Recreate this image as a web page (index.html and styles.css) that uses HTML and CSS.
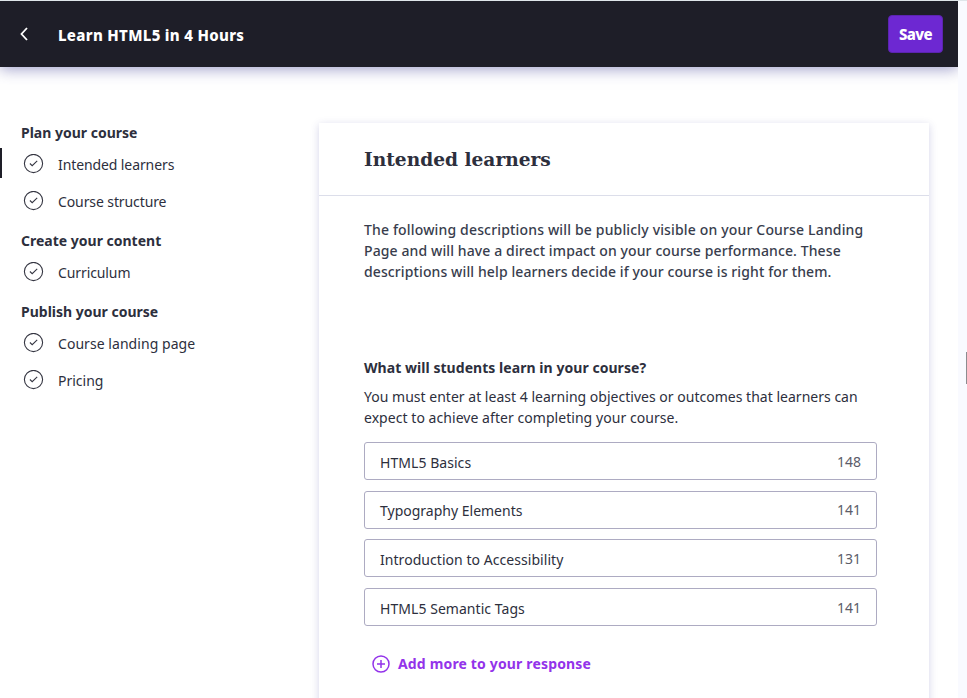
FILE: index.html
```html
<!DOCTYPE html>
<html lang="en">
<head>
<meta charset="utf-8">
<title>Learn HTML5 in 4 Hours</title>
<link rel="stylesheet" href="styles.css">
</head>
<body>
<svg width="0" height="0" class="defs"><symbol id="check" viewBox="0 0 20 20"><circle cx="10" cy="9.5" r="9.1"/><path d="M6.4 9.5l2.3 2.2 5-4.8"/></symbol></svg>
<div class="page">
  <header class="topbar">
    <svg class="back" viewBox="0 0 10 14"><path d="M8 1L2.5 7l5.5 6"/></svg>
    <span class="course">Learn HTML5 in 4 Hours</span>
    <button class="save">Save</button>
  </header>
  <div class="columns">
    <nav class="sidebar">
      <section class="group">
        <h3>Plan your course</h3>
        <a class="item active"><svg><use href="#check"/></svg><span class="tight">Intended learners</span></a>
        <a class="item"><svg><use href="#check"/></svg><span class="tight">Course structure</span></a>
      </section>
      <section class="group">
        <h3>Create your content</h3>
        <a class="item"><svg><use href="#check"/></svg><span class="tight">Curriculum</span></a>
      </section>
      <section class="group">
        <h3>Publish your course</h3>
        <a class="item"><svg><use href="#check"/></svg><span class="loose">Course landing page</span></a>
        <a class="item"><svg><use href="#check"/></svg><span>Pricing</span></a>
      </section>
    </nav>
    <main class="card">
      <h1>Intended learners</h1>
      <div class="content">
        <p class="intro"><span class="wide">The following descriptions will be publicly visible on your Course Landing</span><br>Page and will have a direct impact on your course performance. These<br>descriptions will help learners decide if your course is right for them.</p>
        <h2>What will students learn in your course?</h2>
        <p class="hint">You must enter at least 4 learning objectives or outcomes that learners can<br><span class="loose">expect to achieve after completing your course.</span></p>
        <div class="fields">
          <div class="field"><span class="loose">HTML5 Basics</span><span class="count">148</span></div>
          <div class="field"><span>Typography Elements</span><span class="count">141</span></div>
          <div class="field"><span class="loose">Introduction to Accessibility</span><span class="count">131</span></div>
          <div class="field"><span class="loose">HTML5 Semantic Tags</span><span class="count">141</span></div>
        </div>
        <a class="add"><svg viewBox="0 0 18 18"><circle cx="9" cy="9" r="8"/><path d="M9 5v8M5 9h8"/></svg><span>Add more to your response</span></a>
      </div>
    </main>
  </div>
</div>
<div class="gutter"><div class="thumb"></div></div>
</body>
</html>
```
FILE: styles.css
```css
* { box-sizing: border-box; margin: 0; padding: 0; }
body {
  display: flex; width: 967px; height: 698px; overflow: hidden;
  border-top: 1px solid #dfe6ea; background: #fff;
  font: 14px/21px "Noto Sans", "Open Sans", sans-serif; color: #2d2f3d;
}
.defs { position: absolute; }
.page { width: 958px; height: 697px; overflow: hidden; }
.gutter { width: 9px; background: #f9faff; display: flex; justify-content: flex-end; padding-top: 351px; }
.thumb { width: 1px; height: 32px; background: #8c8c90; }
.tight { letter-spacing: -.1px; }
.loose { letter-spacing: .05px; }
.topbar {
  height: 66px; background: #1e1e28; display: flex; align-items: center;
  padding: 0 15px 0 19px; box-shadow: 0 2px 14px rgba(60, 60, 150, .5);
}
.back { width: 10px; height: 14px; fill: none; stroke: #fff; stroke-width: 1.8; }
.course { margin-left: 29px; color: #fff; font-weight: 800; font-size: 15px; letter-spacing: .31px; padding-top: 3px; }
.save {
  margin-left: auto; width: 55px; height: 38px; border: 1px solid #5b24b0; border-radius: 4px;
  background: #6d28d2; color: #fff; font: 800 15px/20px "Noto Sans", sans-serif; letter-spacing: -.6px;
}
.columns { display: flex; height: 631px; }
.sidebar { width: 319px; padding-top: 53px; }
.group { margin-bottom: 8px; }
.group h3 { height: 26px; padding-left: 21px; font-size: 14px; line-height: 26px; white-space: nowrap; }
.item { display: flex; align-items: center; height: 37px; padding-left: 23px; }
.item svg { width: 21px; height: 20px; fill: none; stroke: #353642; stroke-width: 1.1; margin: 0 14px 2px 0; }
.active { position: relative; }
.active::before { content: ""; position: absolute; left: 0; top: 2px; width: 2px; height: 30px; background: #1e1e28; }
.card { width: 610px; height: 700px; margin-top: 56px; background: #fff; box-shadow: 0 2px 8px rgba(60, 60, 150, .22); }
.card h1 {
  height: 73px; border-bottom: 1px solid #dcdeea; padding: 23px 45px 0;
  font: 700 18.6px/28px "DejaVu Serif", serif; white-space: nowrap;
}
.content { padding: 23px 45px 0; white-space: nowrap; }
.intro { font-weight: 500; color: #383d4d; letter-spacing: .11px; }
.wide { letter-spacing: .16px; }
.content h2 { margin-top: 75px; font-size: 14px; line-height: 21px; letter-spacing: .05px; }
.hint { margin-top: 8px; letter-spacing: .015px; }
.fields { display: grid; gap: 10.7px; margin-top: 14px; width: 513px; }
.field {
  display: flex; justify-content: space-between; align-items: center; height: 38px;
  padding: 2px 15px 0; border: 1px solid #adabc2; border-radius: 3px;
}
.count { color: #5c5c69; padding-bottom: 2px; }
.add { display: flex; align-items: center; margin: 27px 0 0 8px; color: #9333ea; font-weight: 700; letter-spacing: .16px; }
.add svg { width: 18px; height: 18px; margin-right: 8px; fill: none; stroke: #9333ea; stroke-width: 1.5; }
```
